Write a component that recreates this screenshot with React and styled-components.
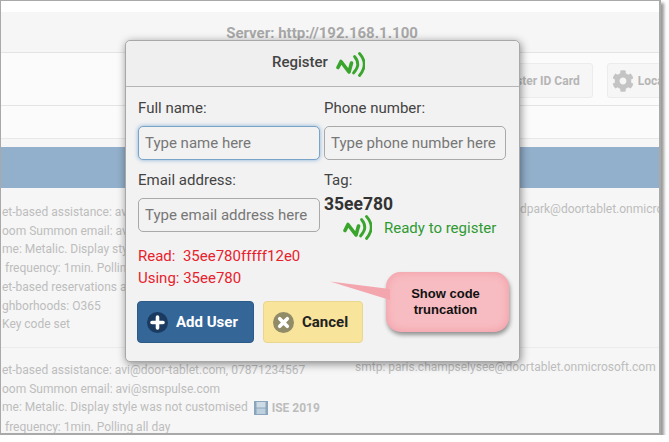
import React from "react";
import styled, { createGlobalStyle } from "styled-components";
import { FaCog } from "react-icons/fa";

const GlobalStyle = createGlobalStyle`
  html, body {
    margin: 0;
    padding: 0;
    background: #fff;
    font-family: Roboto, "Liberation Sans", sans-serif;
  }
`;

function NfcIcon() {
  return (
    <svg width="29" height="25" viewBox="0 0 29 25" fill="none" stroke="#3aa52d" strokeLinecap="round" strokeLinejoin="round">
      <path d="M2 15.5 L5 9.5 L13 20 L15.5 11" strokeWidth="3.6" />
      <path d="M18.5 4.5 Q25.5 12.5 17.5 21" strokeWidth="2.8" />
      <path d="M23.5 1.5 Q33 12 23.5 23.5" strokeWidth="2.8" />
    </svg>
  );
}

function FilmIcon() {
  return (
    <svg width="14" height="14" viewBox="0 0 14 14">
      <rect x="0" y="0" width="14" height="14" fill="#8ba6bc" />
      <rect x="2.5" y="1" width="9" height="5.5" fill="#cfdbe4" />
      <rect x="2.5" y="7.5" width="9" height="5.5" fill="#bdd0de" />
    </svg>
  );
}

function PlusIcon() {
  return (
    <svg width="21" height="21" viewBox="0 0 21 21">
      <circle cx="10.5" cy="10.5" r="10.5" fill="#1b3a5f" />
      <path d="M10.5 5v11M5 10.5h11" stroke="#fff" strokeWidth="3.6" strokeLinecap="round" />
    </svg>
  );
}

function CrossIcon() {
  return (
    <svg width="21" height="21" viewBox="0 0 21 21">
      <circle cx="10.5" cy="10.5" r="10.5" fill="#918b68" />
      <path d="M6.7 6.7l7.6 7.6M14.3 6.7l-7.6 7.6" stroke="#fff" strokeWidth="3.6" strokeLinecap="round" />
    </svg>
  );
}

export default function App() {
  return (
    <>
      <GlobalStyle />
      <Window>
        <ServerBar>Server: http://192.168.1.100</ServerBar>
        <Toolbar>
          <ToolButton>ster ID Card</ToolButton>
          <ToolButton>
            <FaCog size={22} color="#c4c4c4" />
            Loca
          </ToolButton>
        </Toolbar>
        <FilterRow />
        <BlueBand />
        <Row $height={160} $top={15}>
          <InfoColumn>
            <InfoLine>et-based assistance: av</InfoLine>
            <InfoLine>oom Summon email: av</InfoLine>
            <InfoLine>me: Metalic. Display sty</InfoLine>
            <InfoLine> frequency: 1min. Pollin</InfoLine>
            <InfoLine>et-based reservations a</InfoLine>
            <InfoLine>ghborhoods: O365</InfoLine>
            <InfoLine>Key code set</InfoLine>
          </InfoColumn>
          <SmtpColumn $indent={162}>ldpark@doortablet.onmicros</SmtpColumn>
        </Row>
        <Row $height={87} $top={13}>
          <InfoColumn>
            <InfoLine>et-based assistance: avi@door-tablet.com, 07871234567</InfoLine>
            <InfoLine>oom Summon email: avi@smspulse.com</InfoLine>
            <InfoLine>
              me: Metalic. Display style was not customised
              <Version>
                <FilmIcon />
                ISE 2019
              </Version>
            </InfoLine>
            <InfoLine> frequency: 1min. Polling all day</InfoLine>
          </InfoColumn>
          <SmtpColumn>smtp: paris.champselysee@doortablet.onmicrosoft.com</SmtpColumn>
        </Row>

        <Modal>
          <ModalHeader>
            Register
            <HeaderIcon>
              <NfcIcon />
            </HeaderIcon>
          </ModalHeader>
          <ModalBody>
            <FormGrid>
              <Field>
                <Label>Full name:</Label>
                <Input $focused placeholder="Type name here" />
              </Field>
              <Field>
                <Label>Phone number:</Label>
                <Input placeholder="Type phone number here" />
              </Field>
              <Field>
                <Label>Email address:</Label>
                <Input placeholder="Type email address here" />
              </Field>
              <Field>
                <Label>Tag:</Label>
                <TagValue>35ee780</TagValue>
                <ReadyRow>
                  <NfcIcon />
                  Ready to register
                </ReadyRow>
              </Field>
            </FormGrid>
            <Notice>
              <div>Read:&nbsp; 35ee780fffff12e0</div>
              <div>Using: 35ee780</div>
            </Notice>
            <Actions>
              <ActionButton $variant="primary">
                <PlusIcon />
                Add User
              </ActionButton>
              <ActionButton $variant="warning">
                <CrossIcon />
                Cancel
              </ActionButton>
            </Actions>
          </ModalBody>
        </Modal>

        <Callout>
          <CalloutTail width="62" height="24" viewBox="0 0 62 24">
            <path d="M0 0.5 L60 8 L60 19 Z" fill="#f4a6ae" />
          </CalloutTail>
          Show code
          <br />
          truncation
        </Callout>
      </Window>
    </>
  );
}

const Window = styled.div`
  position: relative;
  box-sizing: border-box;
  width: 661px;
  height: 435px;
  padding-top: 11px;
  overflow: hidden;
  background: #f6f6f6;
  background-clip: padding-box;
  border: 1px solid #a9a9a9;
  border-width: 1px 2px 2px 1px;
  box-shadow: 3px 3px 3px #999;
  color: #bdbdbd;

  &::before {
    content: "";
    position: absolute;
    top: 0;
    left: 0;
    right: 0;
    height: 11px;
    background: #fff;
  }
`;

const ServerBar = styled.div`
  box-sizing: border-box;
  height: 41px;
  padding: 12px 16px 0 0;
  text-align: center;
  font-size: 15px;
  font-weight: 700;
  color: #a8a8a8;
  border-bottom: 1px solid #e4e4e4;
`;

const Toolbar = styled.div`
  box-sizing: border-box;
  display: flex;
  gap: 14px;
  height: 53px;
  padding: 10px 0 0 510px;
  white-space: nowrap;
  background: #fbfbfb;
  border-bottom: 1px solid #e4e4e4;
`;

const ToolButton = styled.div`
  box-sizing: border-box;
  flex: none;
  display: flex;
  align-items: center;
  gap: 4px;
  height: 35px;
  padding: 0 12px 0 4px;
  font-size: 12px;
  font-weight: 700;
  color: #b5b5b5;
  background: #f6f6f6;
  border: 1px solid #ececec;
  border-radius: 3px;
`;

const FilterRow = styled.div`
  height: 33px;
  box-sizing: border-box;
  margin-bottom: 8px;
  background: #fbfbfb;
  border-bottom: 1px solid #e8e8e8;
`;

const BlueBand = styled.div`
  height: 41px;
  background: #92afcb;
`;

const Row = styled.div`
  box-sizing: border-box;
  display: grid;
  grid-template-columns: 354px 1fr;
  height: ${(p) => p.$height}px;
  padding-top: ${(p) => p.$top}px;
  border-bottom: 1px solid #ebebeb;
  font-size: 12px;
  white-space: nowrap;

  &:last-of-type {
    border-bottom: 0;
  }
`;

const InfoColumn = styled.div`
  padding-left: 1px;
  line-height: 18.7px;
`;

const InfoLine = styled.div`
  white-space: pre;
`;

const Version = styled.span`
  display: inline-flex;
  align-items: center;
  gap: 4px;
  margin-left: 6px;
  font-weight: 700;
  vertical-align: middle;
`;

const SmtpColumn = styled.div`
  margin-top: -3px;
  padding-left: ${(p) => p.$indent || 0}px;
  line-height: 18.7px;
`;

const Modal = styled.div`
  position: absolute;
  top: 39px;
  left: 124px;
  box-sizing: border-box;
  width: 395px;
  height: 322px;
  background: #f2f2f2;
  border: 1px solid #a8a8a8;
  border-radius: 5px;
  box-shadow: 1px 2px 8px rgba(0, 0, 0, 0.45);
  color: #444;
`;

const ModalHeader = styled.div`
  box-sizing: border-box;
  display: flex;
  align-items: center;
  justify-content: center;
  gap: 8px;
  height: 46px;
  padding: 0 8px 3px 0;
  font-size: 15px;
  font-weight: 500;
  background: #efefef;
  border-bottom: 1px solid #b5b5b5;
  border-radius: 5px 5px 0 0;
`;

const HeaderIcon = styled.span`
  display: flex;
  margin-top: 5px;
`;

const ModalBody = styled.div`
  padding: 9px 12px 0;
`;

const FormGrid = styled.div`
  display: grid;
  grid-template-columns: 182px 182px;
  gap: 8px 4px;
`;

const Field = styled.div`
  display: flex;
  flex-direction: column;
`;

const Label = styled.div`
  height: 24px;
  margin-bottom: 6px;
  font-size: 15px;
  line-height: 24px;
`;

const Input = styled.input`
  box-sizing: border-box;
  width: 100%;
  height: 34px;
  padding: 0 6px;
  font-family: inherit;
  font-size: 15px;
  color: #444;
  background: #f2f2f2;
  border: 1px solid ${(p) => (p.$focused ? "#7aa3c8" : "#a9a9a9")};
  border-radius: 5px;
  box-shadow: ${(p) => (p.$focused ? "0 0 4px rgba(90, 150, 210, 0.7)" : "none")};
  outline: none;

  &::placeholder {
    color: #777;
    opacity: 1;
  }
`;

const TagValue = styled.div`
  margin-top: -6px;
  font-size: 17.5px;
  font-weight: 700;
  line-height: 24px;
  color: #333;
`;

const ReadyRow = styled.div`
  display: flex;
  align-items: center;
  gap: 12px;
  height: 25px;
  margin: -1px 0 -7px;
  padding-left: 19px;
  font-size: 15px;
  color: #2f9a33;
`;

const Notice = styled.div`
  margin-top: 12px;
  font-size: 15px;
  line-height: 22px;
  color: #e8212c;
`;

const Actions = styled.div`
  display: flex;
  gap: 9px;
  margin: 12px 0 0 -1px;
`;

const ActionButton = styled.div`
  box-sizing: border-box;
  display: flex;
  align-items: center;
  gap: 8px;
  height: 42px;
  padding: 0 9px;
  font-size: 15px;
  font-weight: 700;
  border-radius: 4px;
  width: ${(p) => (p.$variant === "primary" ? "117px" : "100px")};
  color: ${(p) => (p.$variant === "primary" ? "#fff" : "#222")};
  background: ${(p) => (p.$variant === "primary" ? "#356698" : "#f8e49b")};
  border: 1px solid ${(p) => (p.$variant === "primary" ? "#2c5a89" : "#e9d78f")};
`;

const Callout = styled.div`
  position: absolute;
  top: 271px;
  left: 385px;
  box-sizing: border-box;
  width: 123px;
  height: 60px;
  padding: 14px 4px 0 0;
  text-align: center;
  font-family: "Liberation Sans", sans-serif;
  font-size: 13px;
  font-weight: 700;
  line-height: 16px;
  color: #111;
  background: #f7bcc1;
  border-radius: 15px;
  box-shadow: inset 0 0 10px #f29aa3, 1px 3px 4px rgba(0, 0, 0, 0.4);
`;

const CalloutTail = styled.svg`
  position: absolute;
  top: 9px;
  left: -56px;
`;
